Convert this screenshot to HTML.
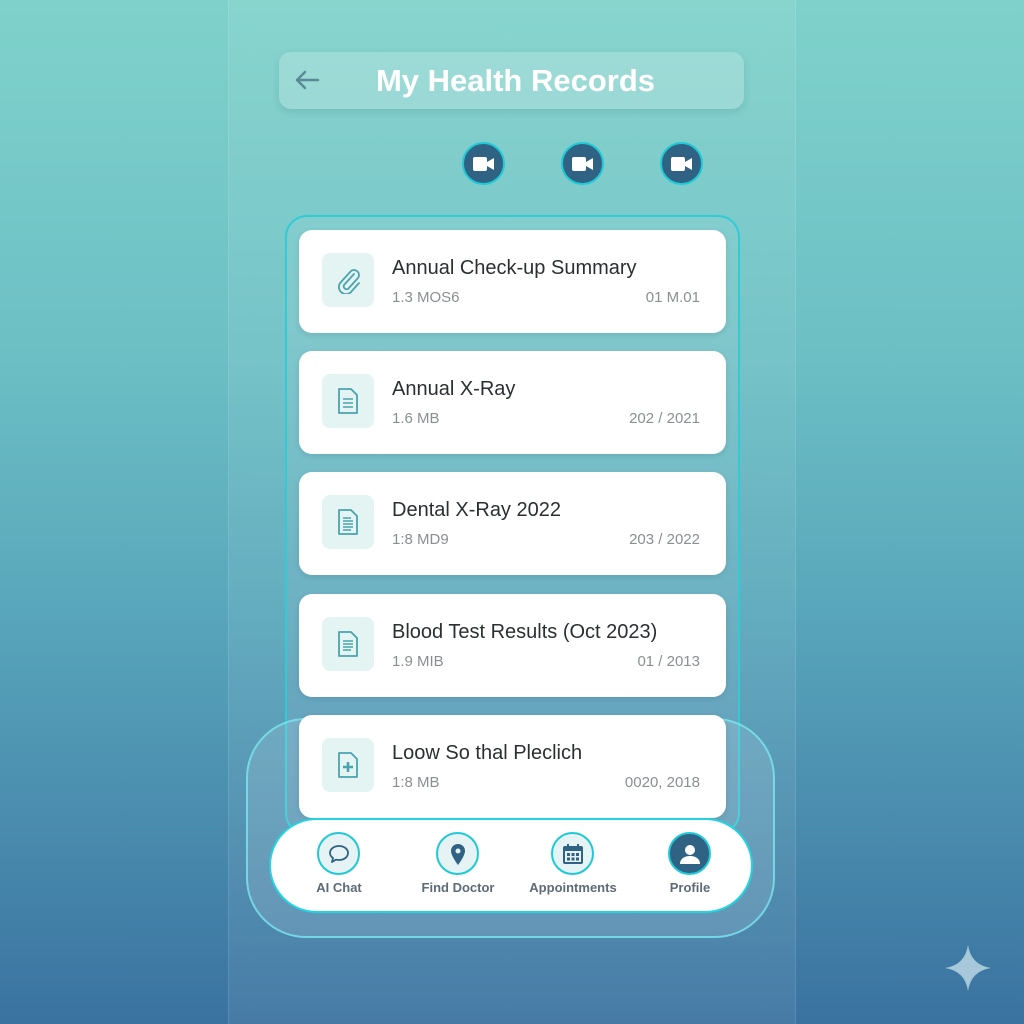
<!DOCTYPE html>
<html><head><meta charset="utf-8"><style>
*{margin:0;padding:0;box-sizing:border-box}
body{width:1024px;height:1024px;overflow:hidden;font-family:"Liberation Sans",sans-serif;background:linear-gradient(180deg,#7fd2cb 0%,#6cbfc4 35%,#58a6bb 60%,#4a8cae 80%,#3a72a0 100%);position:relative}
.panel{position:absolute;left:228px;top:0;width:568px;height:1024px;background:rgba(255,255,255,0.07);border-left:1px solid rgba(255,255,255,0.1);border-right:1px solid rgba(255,255,255,0.1)}
.hdr{position:absolute;left:279px;top:52px;width:465px;height:57px;border-radius:12px;background:rgba(255,255,255,0.2);box-shadow:0 3px 8px rgba(0,60,80,0.12)}
.hdr .t{position:absolute;left:0;right:0;top:11px;text-align:center;color:#fff;font-size:31px;font-weight:bold;padding-left:8px}
.hdr svg{position:absolute;left:14px;top:16px}
.vc{position:absolute;top:142px;width:43px;height:43px;border-radius:50%;background:#2f6283;border:2px solid #1fc9d6}
.vc svg{position:absolute;left:9px;top:11px}
.frame{position:absolute;left:285px;top:215px;width:455px;height:620px;border:2px solid #2fcbd6;border-radius:22px;background:rgba(255,255,255,0.06)}
.card{position:absolute;left:299px;width:427px;height:103px;background:#fff;border-radius:13px;box-shadow:0 2px 6px rgba(0,50,70,0.12)}
.ib{position:absolute;left:23px;top:23px;width:52px;height:54px;border-radius:8px;background:#e3f4f3}
.ib svg{position:absolute;left:14px;top:13px}
.ti{position:absolute;left:93px;top:27px;font-size:20px;color:#2b2f33}
.s1{position:absolute;left:93px;top:59px;font-size:15px;color:#8a8f93}
.s2{position:absolute;right:26px;top:59px;font-size:15px;color:#8a8f93}
.glass{position:absolute;left:246px;top:718px;width:529px;height:220px;border-radius:60px;border:2px solid rgba(120,230,240,0.8);background:rgba(255,255,255,0.12)}
.nav{position:absolute;left:269px;top:818px;width:484px;height:95px;border-radius:48px;background:#fff;border:2px solid #22d3e0}
.ni{position:absolute;top:12px;width:43px;height:43px;border-radius:50%;border:2px solid #1fc9d6;background:#e5f3f4}
.ni svg{position:absolute;left:9px;top:9px}
.nl{position:absolute;top:60px;font-size:13px;font-weight:bold;color:#5d6b78;width:120px;text-align:center}
</style></head><body>
<div class="panel"></div>
<div class="hdr"><svg width="28" height="24" viewBox="0 0 28 24"><path d="M25 12H4M12 4 4 12l8 8" stroke="#5a8a9a" stroke-width="2.5" fill="none" stroke-linecap="round" stroke-linejoin="round"/></svg><div class="t">My Health Records</div></div>
<div class="vc" style="left:462px"><svg width="22" height="18" viewBox="0 0 22 18"><rect x="0" y="2" width="14" height="14" rx="2" fill="#fff"/><path d="M14 7l7-4v12l-7-4z" fill="#fff"/></svg></div>
<div class="vc" style="left:561px"><svg width="22" height="18" viewBox="0 0 22 18"><rect x="0" y="2" width="14" height="14" rx="2" fill="#fff"/><path d="M14 7l7-4v12l-7-4z" fill="#fff"/></svg></div>
<div class="vc" style="left:660px"><svg width="22" height="18" viewBox="0 0 22 18"><rect x="0" y="2" width="14" height="14" rx="2" fill="#fff"/><path d="M14 7l7-4v12l-7-4z" fill="#fff"/></svg></div>
<div class="frame"></div>
<div class="glass"></div>

<div class="card" style="top:230px"><div class="ib"><svg width="26" height="28" viewBox="0 0 26 28"><path d="M18 8 8 19a3 3 0 0 0 4 4L22 12a5 5 0 0 0-7-7L5 16a7 7 0 0 0 10 10l8-9" stroke="#4aa3ad" stroke-width="1.8" fill="none" stroke-linecap="round"/></svg></div><div class="ti">Annual Check-up Summary</div><div class="s1">1.3 MOS6</div><div class="s2">01 M.01</div></div>
<div class="card" style="top:351px"><div class="ib"><svg width="24" height="28" viewBox="0 0 24 28"><path d="M3 2h12l6 6v18H3z" stroke="#4aa3ad" stroke-width="1.8" fill="none" stroke-linejoin="round"/><path d="M7 12h10M7 16h10M7 20h10" stroke="#4aa3ad" stroke-width="1.6"/></svg></div><div class="ti">Annual X-Ray</div><div class="s1">1.6 MB</div><div class="s2">202 / 2021</div></div>
<div class="card" style="top:472px"><div class="ib"><svg width="24" height="28" viewBox="0 0 24 28"><path d="M3 2h12l6 6v18H3z" stroke="#4aa3ad" stroke-width="1.8" fill="none" stroke-linejoin="round"/><path d="M7 10h8M7 13h10M7 16h10M7 19h10M7 22h8" stroke="#4aa3ad" stroke-width="1.4"/></svg></div><div class="ti">Dental X-Ray 2022</div><div class="s1">1:8 MD9</div><div class="s2">203 / 2022</div></div>
<div class="card" style="top:594px"><div class="ib"><svg width="24" height="28" viewBox="0 0 24 28"><path d="M3 2h12l6 6v18H3z" stroke="#4aa3ad" stroke-width="1.8" fill="none" stroke-linejoin="round"/><path d="M7 11h10M7 14h10M7 17h10M7 20h8" stroke="#4aa3ad" stroke-width="1.4"/></svg></div><div class="ti">Blood Test Results (Oct 2023)</div><div class="s1">1.9 MIB</div><div class="s2">01 / 2013</div></div>
<div class="card" style="top:715px"><div class="ib"><svg width="24" height="28" viewBox="0 0 24 28"><path d="M3 2h12l6 6v18H3z" stroke="#4aa3ad" stroke-width="1.8" fill="none" stroke-linejoin="round"/><path d="M12 11v10M7 16h10" stroke="#4aa3ad" stroke-width="2.6"/></svg></div><div class="ti">Loow So thal Pleclich</div><div class="s1">1:8 MB</div><div class="s2">0020, 2018</div></div>

<div class="nav">
<div class="ni" style="left:46px"><svg width="22" height="22" viewBox="0 0 22 22"><path d="M11 3c5 0 9 3 9 7s-4 7-9 7c-1 0-2 0-3-.4L4 19l1-4C3 13.6 2 12 2 10c0-4 4-7 9-7z" stroke="#2f6283" stroke-width="1.8" fill="none" stroke-linejoin="round"/></svg></div>
<div class="nl" style="left:8px">AI Chat</div>
<div class="ni" style="left:165px"><svg width="22" height="24" viewBox="0 0 22 24"><path d="M11 1a7 7 0 0 1 7 7c0 5-7 14-7 14S4 13 4 8a7 7 0 0 1 7-7z" fill="#2f6283"/><circle cx="11" cy="8" r="2.5" fill="#e5f3f4"/></svg></div>
<div class="nl" style="left:127px">Find Doctor</div>
<div class="ni" style="left:280px"><svg width="22" height="22" viewBox="0 0 22 22"><rect x="1" y="3" width="20" height="18" rx="2" fill="#2f6283"/><rect x="3" y="8" width="16" height="11" fill="#e5f3f4"/><path d="M6 1v4M16 1v4" stroke="#2f6283" stroke-width="2"/><g fill="#2f6283"><rect x="5" y="10" width="3" height="3"/><rect x="9.5" y="10" width="3" height="3"/><rect x="14" y="10" width="3" height="3"/><rect x="5" y="14.5" width="3" height="3"/><rect x="9.5" y="14.5" width="3" height="3"/><rect x="14" y="14.5" width="3" height="3"/></g></svg></div>
<div class="nl" style="left:242px">Appointments</div>
<div class="ni" style="left:397px;background:#2f6283"><svg width="22" height="22" viewBox="0 0 22 22"><circle cx="11" cy="7" r="5" fill="#fff"/><path d="M1 21c0-5 4-8 10-8s10 3 10 8z" fill="#fff"/></svg></div>
<div class="nl" style="left:359px">Profile</div>
</div>

<svg style="position:absolute;left:943px;top:943px" width="50" height="50" viewBox="0 0 50 50"><path d="M25 2Q28 22 48 25Q28 28 25 48Q22 28 2 25Q22 22 25 2z" fill="#a6c8da"/></svg>
</body></html>
